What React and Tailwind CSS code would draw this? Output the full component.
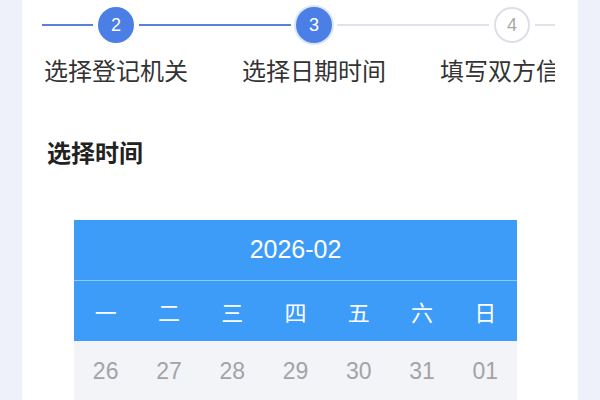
import React from "react";

const cjk = { fontFamily: '"Noto Sans CJK SC", "Noto Sans", sans-serif' };
const latin = { fontFamily: '"Liberation Sans", "Noto Sans CJK SC", sans-serif' };

function Step({ n, label, state, leftLine, rightLine }) {
  const lineCls = (c) => (c === "blue" ? "bg-[#5a80dc]" : "bg-[#dfe2e8]");
  return (
    <div className="w-[198px] shrink-0 flex flex-col items-center">
      <div className="w-full h-[44px] flex items-center">
        <div className={`flex-1 h-[2px] ${lineCls(leftLine)}`} />
        <div className="px-[5px]">
          {state === "done" || state === "active" ? (
            <div
              className={`w-[36px] h-[36px] rounded-full bg-[#4b7fe6] flex items-center justify-center text-white text-[18px] ${
                state === "active" ? "ring-[2px] ring-[#dbe6fb]" : ""
              }`}
              style={latin}
            >
              {n}
            </div>
          ) : (
            <div
              className="w-[36px] h-[36px] rounded-full bg-white border-[2px] border-[#dcdfe5] flex items-center justify-center text-[#a8a8a8] text-[18px]"
              style={latin}
            >
              {n}
            </div>
          )}
        </div>
        <div className={`flex-1 h-[2px] ${lineCls(rightLine)}`} />
      </div>
      <div className="mt-[6px] text-[24px] leading-[34px] text-[#333333] whitespace-nowrap" style={cjk}>
        {label}
      </div>
    </div>
  );
}

export default function App() {
  const weekdays = ["一", "二", "三", "四", "五", "六", "日"];
  const days = ["26", "27", "28", "29", "30", "31", "01"];
  return (
    <div className="w-[600px] h-[400px] bg-[#eef1f9] overflow-hidden">
      <div className="ml-[22px] w-[556px] h-full bg-white pt-[3px]">
        <div className="ml-[20px] w-[513px] overflow-hidden">
          <div className="flex ml-[-25px]">
            <Step n="2" label="选择登记机关" state="done" leftLine="blue" rightLine="blue" />
            <Step n="3" label="选择日期时间" state="active" leftLine="blue" rightLine="gray" />
            <Step n="4" label="填写双方信息" state="todo" leftLine="gray" rightLine="gray" />
          </div>
        </div>
        <div className="ml-[25px] mt-[48px] text-[24px] leading-[34px] font-semibold text-[#222222]" style={cjk}>
          选择时间
        </div>
        <div className="ml-[52px] mt-[51px] w-[443px]">
          <div className="h-[60px] bg-[#3d9cf8] flex items-center justify-center text-white text-[25px]" style={latin}>
            2026-02
          </div>
          <div className="h-[1px] bg-[#94c8f9]" />
          <div className="h-[60px] bg-[#3d9cf8] grid grid-cols-7">
            {weekdays.map((w) => (
              <div key={w} className="flex items-center justify-center text-white text-[22px]" style={cjk}>
                {w}
              </div>
            ))}
          </div>
          <div className="h-[60px] bg-[#f3f4f8] grid grid-cols-7">
            {days.map((d) => (
              <div key={d} className="flex items-center justify-center text-[#a3a3a6] text-[23px]" style={latin}>
                {d}
              </div>
            ))}
          </div>
        </div>
      </div>
    </div>
  );
}
